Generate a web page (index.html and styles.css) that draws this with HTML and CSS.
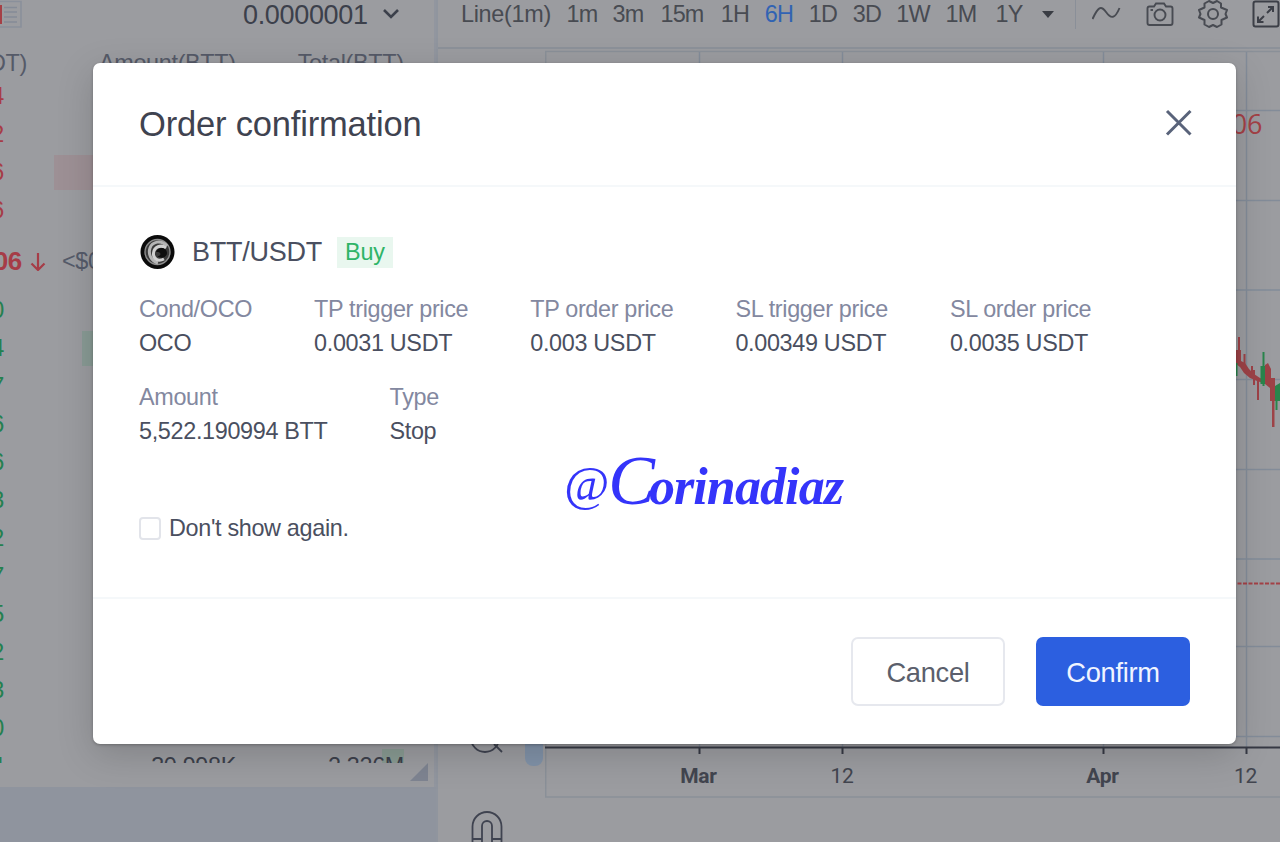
FILE: index.html
```html
<!DOCTYPE html>
<html lang="en">
<head>
    <meta charset="UTF-8">
    <meta name="viewport" content="width=device-width, initial-scale=1.0">
    <title>Order confirmation</title>
    <link rel="stylesheet" href="styles.css">
</head>
<body>
    <div class="page">
        <div class="left">
            <div class="book">
                <div class="precision">
                    <svg class="layout-icon" width="22" height="28" viewBox="0 0 22 28" fill="none">
                        <path d="M0 1.5H21V27H0" stroke="#8a909b" stroke-width="1.6"/>
                        <path d="M4 7.5H17M4 12H17M4 17H17M4 22H17" stroke="#858b97" stroke-width="1.6"/>
                        <path d="M0 5H2V24H0Z" fill="#a54046"/>
                    </svg>
                    <span class="step">0.0000001</span>
                    <svg width="18" height="12" viewBox="0 0 18 12" fill="none" stroke="#3c404b" stroke-width="2.6"><path d="M2 2L9 9L16 2"/></svg>
                </div>
                <div class="book-head">
                    <span class="col-price">Price(USDT)</span>
                    <span class="col-amount">Amount(BTT)</span>
                    <span class="col-total">Total(BTT)</span>
                </div>
                <div class="rows">
                    <div class="row sell"><span>4</span></div>
                    <div class="row sell"><span>2</span></div>
                    <div class="row sell"><span>6</span><i class="depth depth-sell"></i></div>
                    <div class="row sell"><span>6</span></div>
                    <div class="last-price">
                        <b>06</b>
                        <svg width="16" height="20" viewBox="0 0 16 20" fill="none" stroke="#a63c47" stroke-width="2.2"><path d="M8 2V19M1.5 12.5L8 19L14.5 12.5"/></svg>
                        <span>&lt;$0.01</span>
                    </div>
                    <div class="row buy"><span>0</span></div>
                    <div class="row buy"><span>4</span><i class="depth depth-buy"></i></div>
                    <div class="row buy"><span>7</span></div>
                    <div class="row buy"><span>6</span></div>
                    <div class="row buy"><span>6</span></div>
                    <div class="row buy"><span>3</span></div>
                    <div class="row buy"><span>2</span></div>
                    <div class="row buy"><span>7</span></div>
                    <div class="row buy"><span>5</span></div>
                    <div class="row buy"><span>2</span></div>
                    <div class="row buy"><span>3</span></div>
                    <div class="row buy"><span>0</span></div>
                    <div class="row buy last"><span>4</span><em class="amount">30.998K</em><em class="total">2.326M</em></div>
                </div>
                <div class="resize"></div>
            </div>
        </div>
        <div class="chart">
            <div class="toolbar">
                <span class="line">Line(1m)</span>
                <span>1m</span>
                <span>3m</span>
                <span>15m</span>
                <span>1H</span>
                <span class="active">6H</span>
                <span>1D</span>
                <span>3D</span>
                <span>1W</span>
                <span>1M</span>
                <span>1Y</span>
                <i class="caret"></i>
                <i class="divider"></i>
                <svg class="wave" width="30" height="28" viewBox="0 0 30 28" fill="none" stroke="#484b52" stroke-width="1.9"><path d="M0.5 19C6 7 9 5 14 12C19 19 23 19 27.5 8"/></svg>
                <svg class="camera" width="28" height="28" viewBox="0 0 28 28" fill="none" stroke="#484b52" stroke-width="1.9"><path d="M3.5 6.5H8L10 3.5H18L20 6.5H24.5Q26.5 6.5 26.5 8.5V23Q26.5 25 24.5 25H3.5Q1.5 25 1.5 23V8.5Q1.5 6.5 3.5 6.5Z"/><circle cx="14" cy="15" r="5.5"/><path d="M4.5 10H7"/></svg>
                <svg class="gear" width="32" height="30" viewBox="0 0 32 30" fill="none" stroke="#484b52" stroke-width="2" stroke-linejoin="round"><path d="M12 2L16 4L20 2L24 4.5V8.5L30 11L28.5 15L30 18.5L24.500 21V25.5L20 28L16 26L12 28L7.5 25.5V21L2 18.5L3.500 15L2 11L7.5 8.5V4.5Z"/><circle cx="16" cy="15" r="5"/></svg>
                <svg class="full" width="28" height="28" viewBox="0 0 28 28" fill="none" stroke="#3c3f47" stroke-width="2"><rect x="1.5" y="1.5" width="25" height="25" rx="2"/><path d="M15 13L21 7M16 7H21V12M12 16L6 22M6 16.5V22H11.5"/></svg>
            </div>
            <div class="chart-body">
                <div class="tools">
                    <svg width="107" height="793" viewBox="438 49 107 793" fill="none" stroke="#3f4350" stroke-width="1.8">
                        <circle cx="485" cy="738" r="14"/>
                        <path d="M494 744L502 752"/>
                        <rect x="525" y="720" width="18" height="46" rx="8" fill="#8192a8" stroke="none"/>
                        <path d="M472.5 842V826.5A14.5 14.5 0 0 1 501.5 826.5V842M482 842V826A5 5 0 0 1 492 826V842M472.5 839H482M492 839H501.5"/>
                    </svg>
                </div>
                <svg class="plot" width="735" height="793" viewBox="545 49 735 793">
                    <g stroke="#8a9098" stroke-width="1.5" fill="none">
                        <path d="M1280 51.5H545.7V797H1280"/>
                        <path stroke="#838c99" d="M699.5 52V747M842.5 52V747M1103.5 52V747M1246.5 52V747"/>
                        <path stroke="#838c99" d="M546 110.5H1280M546 200.5H1280M546 290H1280M546 379.5H1280M546 469.5H1280M546 559H1280M546 646.5H1280M546 736.5H1280"/>
                    </g>
                    <text class="quote" x="1262" y="134" text-anchor="end">0.00306</text>
                    <g fill="#9d4247">
                        <path d="M1236 350H1241V361L1245 363L1249 369L1254 374L1260 378L1263 379V383L1257 381L1250 378L1244 373L1240 367L1236 364Z"/>
                        <path d="M1238 337h2v16h-2zM1243.5 354h2v12h-2zM1251 366h2v12h-2zM1253 370h2v15h-2zM1257 378h2v22h-2z"/>
                        <path d="M1265 365L1268 363L1271 369V378H1275V401H1270V388L1265 384Z"/>
                        <path d="M1272 378h2.5v49h-2.5z"/>
                    </g>
                    <g fill="#2a854c">
                        <path d="M1262.5 352h2v34h-2zM1260.5 366h4.5v18h-4.5zM1236 363h1.5v13h-1.5zM1275 386L1280 383V401H1275ZM1275.5 400h2v10h-2z"/>
                    </g>
                    <path d="M1237.5 583.5H1280" stroke="#a34146" stroke-width="2" stroke-dasharray="4 1.5"/>
                    <path d="M545 747.5H1280M699.5 748V754M842.5 748V754M1103.5 748V754M1246.5 748V754" stroke="#363944" stroke-width="2"/>
                    <g class="axis" text-anchor="middle">
                        <text class="month" x="698.5" y="783">Mar</text>
                        <text x="842" y="783">12</text>
                        <text class="month" x="1102.5" y="783">Apr</text>
                        <text x="1245.5" y="783">12</text>
                    </g>
                </svg>
            </div>
        </div>
    </div>

    <div class="modal">
        <div class="modal-header">
            <h3>Order confirmation</h3>
            <svg width="28" height="28" viewBox="0 0 28 28" fill="none" stroke="#59637a" stroke-width="3"><path d="M2 2L25.5 25.5M25.5 2L2 25.5"/></svg>
        </div>
        <div class="modal-body">
            <div class="pair">
                <svg width="36" height="36" viewBox="0 0 36 36" fill="none">
                    <circle cx="18.5" cy="18" r="17" fill="#0b0b0b"/>
                    <circle cx="18.5" cy="18" r="12.5" fill="#3a3a3a" stroke="#8d8d8d" stroke-width="1.4"/>
                    <path d="M28 12C22 5 13 8 11 14C9 20 12 27 19 29" stroke="#b5b5b5" stroke-width="3"/>
                    <path d="M27 14C22 10 15 13 14.5 19C14 25 19 28 25 25" stroke="#d0d0d0" stroke-width="3"/>
                    <path d="M17 18C19 12 28 13 28 19C28 24 21 25 18.5 22C21 22 22 20.5 21 19C20 17.5 18 18 17 18Z" fill="#0d0d0d"/>
                </svg>
                <span class="pair-name">BTT/USDT</span>
                <span class="side">Buy</span>
            </div>
            <div class="fields">
                <div class="field"><label>Cond/OCO</label><span>OCO</span></div>
                <div class="field"><label>TP trigger price</label><span>0.0031 USDT</span></div>
                <div class="field"><label>TP order price</label><span>0.003 USDT</span></div>
                <div class="field"><label>SL trigger price</label><span>0.00349 USDT</span></div>
                <div class="field"><label>SL order price</label><span>0.0035 USDT</span></div>
            </div>
            <div class="fields">
                <div class="field"><label>Amount</label><span>5,522.190994 BTT</span></div>
                <div class="field"><label>Type</label><span>Stop</span></div>
            </div>
            <div class="again"><i class="checkbox"></i>Don't show again.</div>
            <div class="signature"><span class="at">@</span><span class="cap">C</span>orinadiaz</div>
        </div>
        <div class="modal-footer">
            <button class="btn cancel">Cancel</button>
            <button class="btn confirm">Confirm</button>
        </div>
    </div>
</body>
</html>
```
FILE: styles.css
```css
* {
    box-sizing: border-box;
}
body {
    margin: 0;
    font-family: "Liberation Sans", Arial, sans-serif;
    font-size: 23.4px;
    letter-spacing: -0.33px;
    background: #9b9ca0;
    font-variant-ligatures: none;
}
svg {
    display: block;
    flex: none;
}
.page {
    display: flex;
    width: 1280px;
    height: 842px;
    overflow: hidden;
}

/* order book */
.left {
    width: 438px;
    flex: none;
    background: #8f949e;
    border-right: 2px solid #90959e;
}
.book {
    height: 787px;
    background: #9b9ca0;
    border-right: 2px solid #92969f;
    position: relative;
}
.precision {
    display: flex;
    align-items: center;
    height: 28px;
    color: #3c404b;
}
.step {
    font-size: 27px;
    margin: 2px 14px 0 221px;
}
.book-head {
    display: flex;
    align-items: center;
    height: 28px;
    margin-top: 21px;
    color: #555a68;
    white-space: nowrap;
}
.col-price {
    width: 27px;
    display: flex;
    justify-content: flex-end;
}
.col-amount {
    margin-left: 72px;
}
.col-total {
    margin-left: 62px;
}
.rows {
    height: 686px;
    overflow: hidden;
}
.row {
    display: flex;
    align-items: center;
    height: 38px;
}
.row span {
    width: 4px;
    margin-right: 1px;
    display: flex;
    justify-content: flex-end;
}
.sell {
    color: #a63c47;
}
.buy {
    color: #24804f;
}
.depth {
    height: 35px;
}
.depth-sell {
    width: 60px;
    margin-left: 49px;
    background: #9d9095;
}
.depth-buy {
    width: 40px;
    margin-left: 77px;
    background: #899b95;
}
.last-price {
    display: flex;
    align-items: center;
    height: 62px;
    padding-top: 2px;
    color: #a63c47;
}
.last-price b {
    width: 22px;
    display: flex;
    justify-content: flex-end;
    font-size: 26px;
    margin-right: 8px;
}
.last-price span {
    margin-left: 16px;
    color: #555b6a;
}
.last em {
    font-style: normal;
    color: #3c404b;
    text-align: right;
}
.amount {
    width: 231px;
}
.total {
    width: 168px;
    background: linear-gradient(to left, #899b93 22px, transparent 22px);
    height: 34px;
    line-height: 34px;
}
.resize {
    position: absolute;
    right: 6px;
    bottom: 6px;
    border-left: 18px solid transparent;
    border-bottom: 18px solid #7e8491;
}

/* chart */
.chart {
    flex: 1;
    min-width: 0;
}
.toolbar {
    display: flex;
    align-items: center;
    height: 49px;
    padding: 0 0 19px 23px;
    border-bottom: 2px solid #8c9199;
    color: #484b52;
    white-space: nowrap;
}
.toolbar span {
    width: 46px;
    flex: none;
    letter-spacing: -0.8px;
    text-align: center;
}
.toolbar .line {
    width: 98px;
    text-align: left;
    letter-spacing: -0.3px;
}
.toolbar span:nth-child(4) {
    width: 62px;
}
.toolbar span:nth-child(n+5) {
    width: 44px;
}
.toolbar span:nth-child(n+9) {
    width: 48px;
}
.toolbar .active {
    color: #3163b3;
}
.caret {
    flex: none;
    border: 6px solid transparent;
    border-top: 7px solid #3a3d44;
    border-bottom: 0;
    margin-left: 9px;
}
.divider {
    flex: none;
    width: 1px;
    height: 30px;
    margin: 0 16px 0 21px;
    background: #8a8f98;
}
.camera {
    margin-left: 24px;
}
.gear {
    margin-left: 23px;
}
.full {
    margin-left: 23px;
}
.chart-body {
    display: flex;
}
.quote {
    font-family: "Open Sans", sans-serif;
    font-size: 27px;
    fill: #a34146;
}
.axis {
    font-family: Roboto, sans-serif;
    font-size: 21px;
    letter-spacing: -0.3px;
    fill: #42454f;
}
.month {
    font-weight: bold;
}

/* dialog */
.modal {
    position: absolute;
    left: 93px;
    top: 63px;
    width: 1143px;
    height: 681px;
    display: flex;
    flex-direction: column;
    background: #fff;
    border-radius: 7px;
    box-shadow: 0 10px 36px rgba(0, 0, 0, 0.17), 0 1px 3px rgba(0, 0, 0, 0.25);
    color: #4a4f60;
}
.modal-header {
    display: flex;
    align-items: center;
    justify-content: space-between;
    height: 124px;
    padding: 0 43px 2px 46px;
    border-bottom: 2px solid #f5f8fa;
}
.modal-header h3 {
    margin: 2px 0 0;
    font-size: 34.5px;
    letter-spacing: -0.18px;
    font-weight: normal;
    color: #3f4350;
}
.modal-body {
    flex: 1;
    padding: 45px 46px 0;
    position: relative;
}
.pair {
    display: flex;
    align-items: center;
    height: 40px;
}
.pair-name {
    margin: 1px 15px 0 17px;
    font-size: 27px;
    letter-spacing: -0.25px;
}
.side {
    height: 31px;
    padding: 0 8px;
    line-height: 31px;
    letter-spacing: -0.2px;
    background: #e9f7ef;
    color: #2fb468;
}
.fields {
    display: flex;
    gap: 62px;
    margin-top: 20px;
}
.field {
    display: flex;
    flex-direction: column;
    line-height: 34px;
}
.field label {
    color: #8388a0;
}
.again {
    display: flex;
    align-items: center;
    gap: 8px;
    margin-top: 67px;
}
.checkbox {
    width: 22px;
    height: 23px;
    border: 2px solid #e2e4ea;
    border-radius: 4px;
}
.signature {
    position: absolute;
    left: 471px;
    top: 261px;
    font-family: "Liberation Serif", serif;
    font-size: 52px;
    font-style: italic;
    font-weight: bold;
    letter-spacing: -0.9px;
    line-height: 66px;
    white-space: nowrap;
    color: #3434fa;
}
.at {
    font-size: 49px;
    vertical-align: 4px;
    font-weight: normal;
}
.cap {
    font-size: 70px;
    font-weight: normal;
    letter-spacing: -6px;
}
.modal-footer {
    display: flex;
    justify-content: flex-end;
    gap: 31px;
    height: 147px;
    padding: 38px 46px 0;
    border-top: 2px solid #f5f8fa;
}
.btn {
    width: 154px;
    height: 69px;
    padding: 2px 0 0;
    border-radius: 7px;
    font-family: inherit;
    font-size: 27.3px;
    letter-spacing: -0.3px;
}
.cancel {
    background: #fff;
    border: 2px solid #e6e8ee;
    color: #5b5f6c;
}
.confirm {
    background: #2c5fe0;
    border: 0;
    color: #f0f4ff;
}
```
